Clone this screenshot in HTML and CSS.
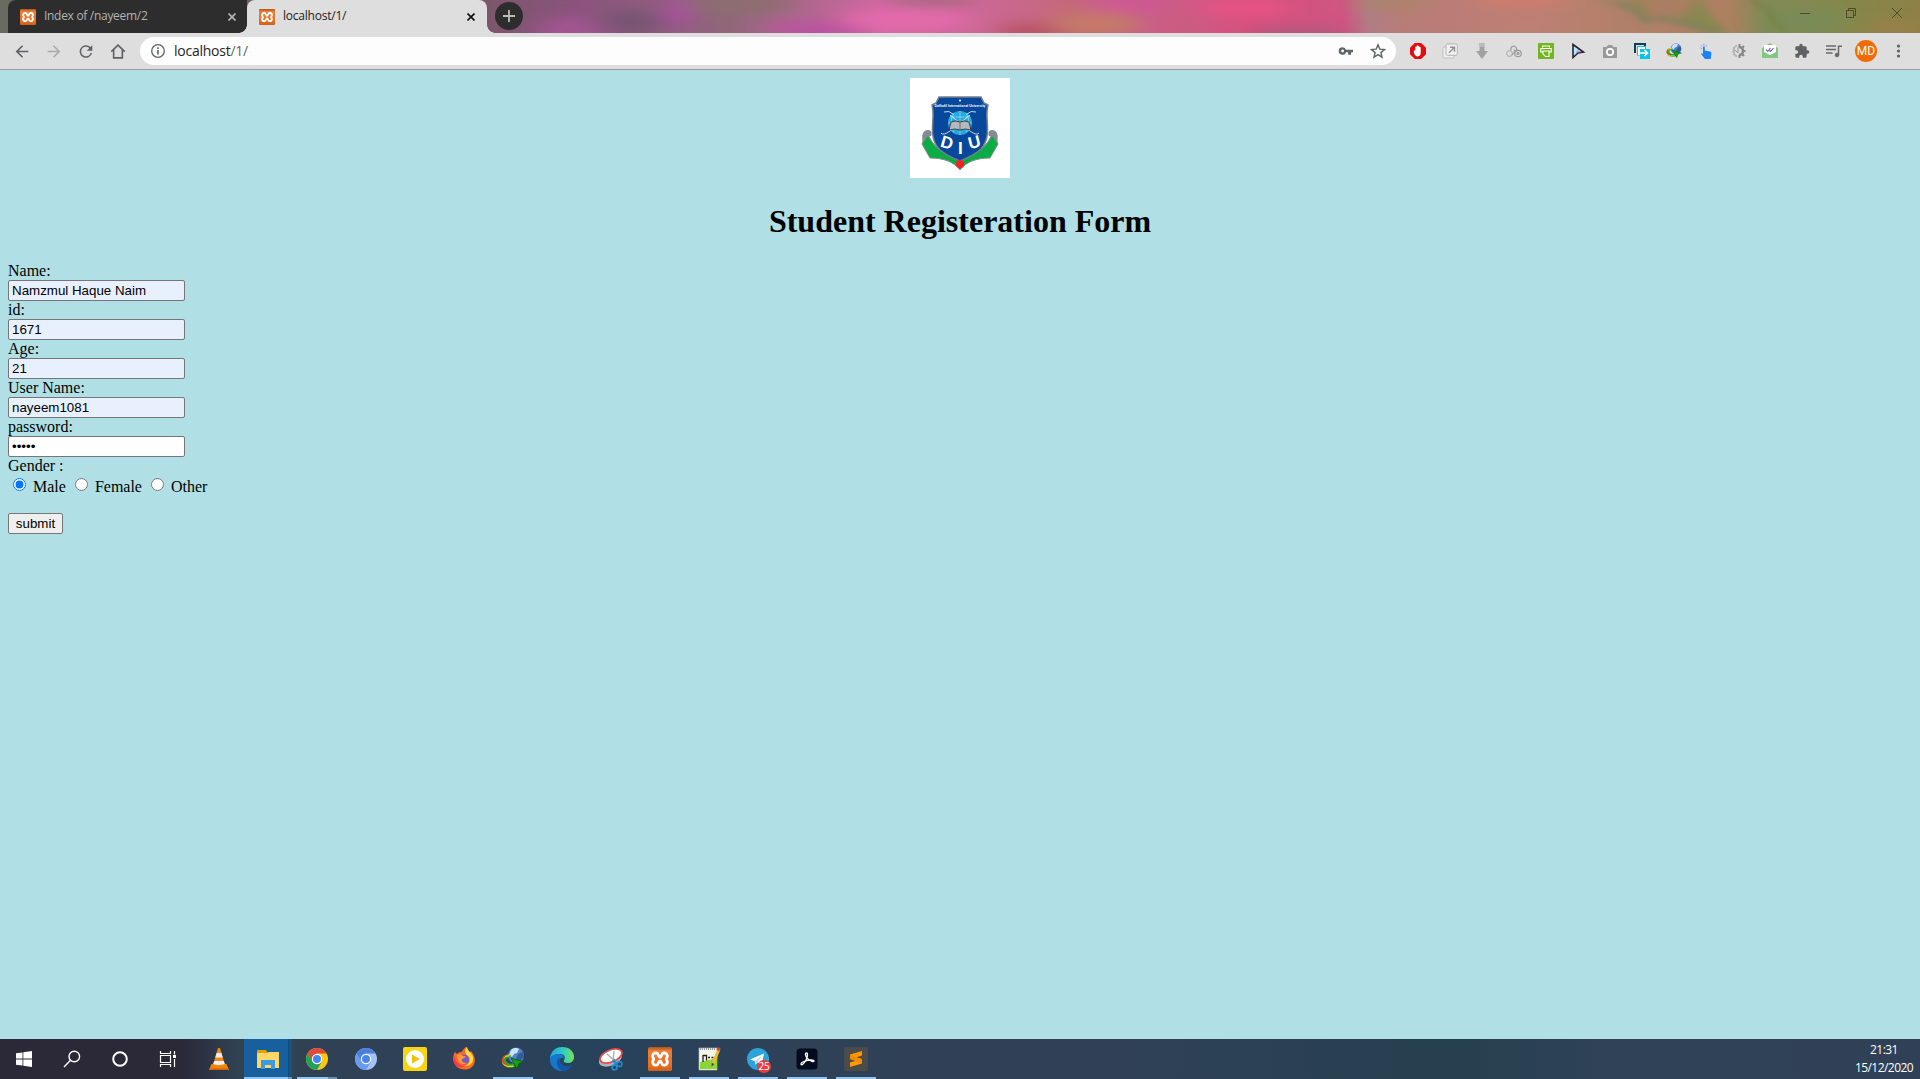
FILE: index.html
```html
<!DOCTYPE html>
<html lang="en">
<head>
<meta charset="utf-8">
<title>localhost/1/</title>
<link rel="stylesheet" href="styles.css">
</head>
<body>
<svg class="defs" width="0" height="0">
  <defs>
    <linearGradient id="xg" x2="0" y2="1"><stop offset="0" stop-color="#a9541c"/><stop offset=".16" stop-color="#ef7d35"/><stop offset=".8" stop-color="#e86c1f"/><stop offset="1" stop-color="#c9601f"/></linearGradient>
    <symbol id="xampp" viewBox="0 0 24 24">
      <rect width="24" height="24" rx="1.500" fill="url(#xg)"/>
      <path d="M4.600 9A3 3 0 0 1 7.600 6h.8C10.600 6 10.200 10.300 12 10.300S13.400 6 15.600 6h.8a3 3 0 0 1 3 3c0 1.700-1.200 1.900-1.200 3.100s1.200 1.400 1.200 3a3 3 0 0 1-3 3h-.8c-2.200 0-1.800-4.100-3.600-4.100s-1.400 4.100-3.600 4.100h-.8a3 3 0 0 1-3-3c0-1.600 1.200-1.800 1.200-3S4.600 10.700 4.600 9z" fill="none" stroke="#fff" stroke-width="2.800" stroke-linejoin="round"/>
    </symbol>
    <symbol id="idm" viewBox="0 0 24 24">
      <circle cx="15" cy="8.500" r="8" fill="#4f83c8"/>
      <path d="M10 3c3-3 7-2 8-1l-2 4-3 1-2 3-3-2z" fill="#c9e2f5"/>
      <path d="M17 7l5-2 1 5-4 4-4-2z" fill="#315c9e"/>
      <path d="M1 15C0 9 5 7 10 8l-2 3c-3 0-4 2-2 4s5 2 7 1l2 3c-6 4-13 1-14-4z" fill="#29a52e"/>
      <path d="M1 13c1-5 5-6 8-5l-1 1.500c-4-.5-6 2-5 5 1 4 6 5 9 4l1 1c-6 2-13-1-12-6.500z" fill="#f1d820"/>
      <path d="M1 12c1-3 4-5 7-4-4 0-6 3-5 6 1 3 3 4 5 5-5-.5-8-4-7-7z" fill="#e8342b"/>
      <path d="M10 11l13 4-5 1.500-2 5.500z" fill="#16a016" stroke="#07570b" stroke-width=".8"/>
    </symbol>
    <filter id="soft" x="-30%" y="-60%" width="160%" height="220%"><feGaussianBlur stdDeviation="12 6"/></filter>
    <filter id="soft2" x="-30%" y="-60%" width="160%" height="220%"><feGaussianBlur stdDeviation="3"/></filter>
    <linearGradient id="sky">
      <stop offset="0" stop-color="#686b60"/><stop offset=".25" stop-color="#7a5769"/><stop offset=".30" stop-color="#8b537e"/><stop offset=".38" stop-color="#90677a"/><stop offset=".46" stop-color="#d067a2"/><stop offset=".51" stop-color="#cc6895"/><stop offset=".56" stop-color="#c46879"/><stop offset=".60" stop-color="#c95f88"/><stop offset=".65" stop-color="#d6517d"/><stop offset=".70" stop-color="#cf5581"/><stop offset=".713" stop-color="#b07d86"/><stop offset=".73" stop-color="#b87c77"/><stop offset=".8" stop-color="#bd8074"/><stop offset=".85" stop-color="#b08068"/><stop offset=".9" stop-color="#ad8060"/><stop offset=".92" stop-color="#828a56"/><stop offset=".96" stop-color="#84884a"/><stop offset="1" stop-color="#8d8145"/>
    </linearGradient>
  </defs>
</svg>

<header class="browser">
  <div class="tabstrip">
    <svg class="theme" width="1920" height="33" viewBox="0 0 1920 33">
      <rect width="1920" height="33" fill="url(#sky)"/>
      <g filter="url(#soft)">
        <ellipse cx="575" cy="30" rx="40" ry="13" fill="#a1558f"/>
        <ellipse cx="630" cy="22" rx="35" ry="12" fill="#785473"/>
        <ellipse cx="678" cy="12" rx="15" ry="18" fill="#a6539a"/>
        <ellipse cx="740" cy="4" rx="55" ry="9" fill="#8c6e70"/>
        <ellipse cx="815" cy="30" rx="50" ry="10" fill="#b9559f"/>
        <ellipse cx="905" cy="20" rx="65" ry="11" fill="#e36aac"/>
        <ellipse cx="930" cy="0" rx="45" ry="5" fill="#9c6878"/>
        <ellipse cx="1035" cy="32" rx="40" ry="10" fill="#b95468"/>
        <ellipse cx="1095" cy="24" rx="45" ry="13" fill="#c5786b"/>
        <ellipse cx="1125" cy="4" rx="38" ry="8" fill="#cf5795"/>
        <ellipse cx="1180" cy="25" rx="24" ry="10" fill="#ca5c80"/>
        <ellipse cx="1245" cy="8" rx="45" ry="9" fill="#e65284"/>
        <ellipse cx="1300" cy="34" rx="50" ry="7" fill="#ae597e"/>
        <ellipse cx="1520" cy="0" rx="50" ry="4" fill="#dc7866"/>
        <ellipse cx="1390" cy="4" rx="40" ry="5" fill="#a98566"/>
        <ellipse cx="1800" cy="22" rx="40" ry="14" fill="#7a8b57"/>
        <ellipse cx="1895" cy="28" rx="30" ry="8" fill="#9a8048"/>
      </g>
      <g filter="url(#soft2)">
        <path d="M1590 0h120l-8 14-22 4-36 2-16-12z" fill="#8b8551" opacity=".75"/>
        <path d="M1645 2h45l-6 11-34 4z" fill="#b27b66" opacity=".8"/>
        <path d="M1675 22l30-14 12 14 15 11h-28z" fill="#7f8a4e" opacity=".8"/>
        <path d="M1618 4l18 8 8 9 14-3 32 7 28 9" fill="none" stroke="#6f8060" stroke-width="3"/>
        <path d="M1752 0l16 10 6 12 12 8" fill="none" stroke="#748348" stroke-width="5"/>
      </g>
    </svg>
    <div class="tab tab-back">
      <svg class="fav" width="16" height="16"><use href="#xampp"/></svg>
      <span class="tab-title">Index of /nayeem/2</span>
      <svg class="tab-x" width="8" height="8" viewBox="0 0 8 8"><path d="M.5.5l7 7M7.500.5l-7 7"/></svg>
    </div>
    <div class="tab tab-front">
      <svg class="fav" width="16" height="16"><use href="#xampp"/></svg>
      <span class="tab-title">localhost/1/</span>
      <svg class="tab-x" width="8" height="8" viewBox="0 0 8 8"><path d="M.5.5l7 7M7.500.5l-7 7"/></svg>
    </div>
    <div class="newtab"><svg width="12" height="12" viewBox="0 0 12 12"><path d="M6 0v12M0 6h12" stroke="#bcbcbc" stroke-width="1.800"/></svg></div>
    <div class="winbtns">
      <svg width="46" height="26"><path d="M18 13.500h10"/></svg>
      <svg width="46" height="26"><path d="M18.500 10.500h7v7h-7zM20.500 10.500v-2h7v7h-2"/></svg>
      <svg width="46" height="26"><path d="M18 8l10 10M28 8l-10 10"/></svg>
    </div>
  </div>

  <div class="toolbar">
    <div class="cells nav">
      <svg viewBox="0 0 24 24" fill="#5f6063"><path d="M20 11H7.830l5.590-5.590L12 4l-8 8 8 8 1.410-1.410L7.830 13H20z"/></svg>
      <svg viewBox="0 0 24 24" fill="#aaa"><path d="M4 11h12.170l-5.590-5.590L12 4l8 8-8 8-1.410-1.410L16.170 13H4z"/></svg>
      <svg viewBox="0 0 24 24" fill="#5f6063"><path d="M17.650 6.350A8 8 0 1 0 19.730 14h-2.080A6 6 0 1 1 12 6c1.660 0 3.140.69 4.220 1.780L13 11h7V4z"/></svg>
      <svg viewBox="0 0 24 24"><path d="M3.500 12.200L12 4l8.500 8.200M6.500 10v10h11V10" fill="none" stroke="#5f6063" stroke-width="2"/></svg>
    </div>
    <div class="omnibox">
      <svg width="16" height="16" viewBox="0 0 16 16"><circle cx="8" cy="8" r="6.300" fill="none" stroke="#5f6368" stroke-width="1.300"/><path d="M8 7v4.500M8 4.300v1.600" stroke="#5f6368" stroke-width="1.600"/></svg>
      <span class="url">localhost<span class="path">/1/</span></span>
      <svg class="key" width="16" height="16" viewBox="0 0 16 16"><path d="M4.600 4.200a3.800 3.800 0 1 0 3.500 5.100h2v2.400h3V9.300H15V6.700H8.100a3.800 3.800 0 0 0-3.500-2.500zm0 2.400a1.400 1.400 0 1 1 0 2.800 1.400 1.400 0 0 1 0-2.800z" fill="#5f6368" fill-rule="evenodd"/></svg>
      <svg width="16" height="16" viewBox="0 0 16 16"><path d="M8 1.800l1.800 4.300 4.700.4-3.600 3.100 1.100 4.600L8 11.700l-4 2.500 1.100-4.600-3.600-3.100 4.700-.4z" fill="none" stroke="#5f6368" stroke-width="1.400"/></svg>
    </div>
    <div class="cells ext">
      <svg viewBox="0 0 16 16"><path d="M4.800 0h6.400L16 4.800v6.400L11.200 16H4.800L0 11.200V4.800z" fill="#e20d12"/><path d="M3.800 8c0-1 1.200-1 1.500.2V4c0-.8 1.200-.8 1.300 0V3c0-.9 1.300-.9 1.400 0v.4c.1-.8 1.300-.8 1.400 0v1c.2-.7 1.300-.6 1.300.2v5.200c0 2.200-1.200 3.600-3 3.600-2.300 0-3.900-2.400-3.900-5.400z" fill="#fff"/></svg>
      <svg viewBox="0 0 16 16"><rect x="1" y="4" width="11" height="11" rx="1.500" fill="#eee" stroke="#bdbdbd"/><rect x="4" y="1" width="11.300" height="11.300" rx="1.500" fill="#f1f1f1" stroke="#b3b3b3"/><path d="M7 9.800l5-5M8 4.300h4.500v4.500" fill="none" stroke="#909090" stroke-width="1.400"/></svg>
      <svg viewBox="0 0 16 16"><path d="M5.500 0h5v8H14L8 16 2 8h3.500z" fill="#a1a1a1"/><path d="M5.500 0h5v4h-5z" fill="#bcbcbc"/></svg>
      <svg viewBox="0 0 16 16" fill="none" stroke="#999" stroke-width="1.200"><path d="M5 7.500C4 4 8 1.600 10 4.500s-.5 4-2 2.500"/><circle cx="3.500" cy="10.500" r="2.800" stroke="#b5b5b5"/><circle cx="12" cy="10.500" r="3.200"/><circle cx="12" cy="10.500" r=".8" stroke-width="1.500"/><path d="M6 12L10 7"/></svg>
      <svg viewBox="0 0 16 16"><rect width="16" height="16" rx="1" fill="#70b61c"/><path d="M4.500 4.500V3h7v1.500M4.500 9H2.800V5.500h10.400V9h-1.700M5 8h6v5.500H7.500L5 11z" fill="none" stroke="#fff" stroke-width="1.100"/></svg>
      <svg viewBox="0 0 16 16"><path d="M3 1.500L13.500 9 8 10l-5 4.500z" fill="#b7e6fb" stroke="#25252d" stroke-width="1.600"/><path d="M7.500 7l4 2-4.500.5-2.500 3z" fill="#c48ced"/></svg>
      <svg viewBox="0 0 16 16"><path d="M1 4h3.500L6 2h4l1.500 2H15v11H1z" fill="#999"/><circle cx="8" cy="9" r="3.200" fill="none" stroke="#fff" stroke-width="1.700"/></svg>
      <svg viewBox="0 0 16 16"><path d="M1 10V1h10v3" fill="none" stroke="#06405d" stroke-width="2"/><path d="M3 3h9v3h4v10H6v-3.500H3z" fill="#06c5e5"/><path d="M4 4h7v2H6v6H4z" fill="#fff"/><path d="M6 10h7M10.500 7l3 3-3 3" fill="none" stroke="#fff" stroke-width="1.700"/></svg>
      <svg viewBox="0 0 24 24"><use href="#idm"/></svg>
      <svg viewBox="0 0 16 16"><path d="M5 4.500c0-1.300 1.800-1.300 1.800 0v3l4.800 1c1.500.3 1.900 1 1.800 2L12.700 16H7L3 11c.4-1 1.300-.7 2 0z" fill="#1981fa"/><path d="M3.800 5.500l-1.500-.5M4.200 3.500L3 2.300M5.900 2.500V.8M7.600 3.500l1.200-1.200" stroke="#58a4f7" stroke-width="1"/></svg>
      <svg viewBox="0 0 16 16" fill="none"><path d="M7 2.500a6 6 0 0 0 0 11M4 4v8" stroke="#b5b5b5" stroke-width="1.800"/><path d="M9 4a4 4 0 0 1 0 8" stroke="#888" stroke-width="2.600"/><path d="M9.500 1v3M9.500 12v3M13 8h2.500M12 5l2-2M12 11l2 2" stroke="#888" stroke-width="2"/><path d="M5 7l3 3V4" stroke="#999"/></svg>
      <svg viewBox="0 0 16 16"><path d="M0 5l8-5 8 5v10H0z" fill="#81c883"/><path d="M2 2h12v7l-6 3-6-3z" fill="#fff"/><path d="M4 6.500l1.700 2L8.500 5M7.500 7.500l1 1L11.500 5" fill="none" stroke="#6857b5" stroke-width="1.100"/></svg>
      <svg viewBox="0 0 24 24" fill="#5f6063"><path d="M20.500 11H19V7a2 2 0 0 0-2-2h-4V3.500a2.500 2.500 0 0 0-5 0V5H4a2 2 0 0 0-2 2v3.800h1.500a2.700 2.700 0 0 1 0 5.400H2V20a2 2 0 0 0 2 2h3.800v-1.500a2.700 2.700 0 0 1 5.400 0V22H17a2 2 0 0 0 2-2v-4h1.500a2.500 2.500 0 0 0 0-5z"/></svg>
      <svg viewBox="0 0 16 16" fill="none" stroke="#68696b" stroke-width="1.500"><path d="M0 3h10M0 6.500h10M0 10h6.500M12.500 12V3.200H16"/><circle cx="11" cy="12" r="1.800" fill="#68696b" stroke-width="1"/></svg>
      <span class="avatar">MD</span>
      <svg viewBox="0 0 16 16" fill="#5f6063"><circle cx="8.500" cy="3" r="1.600"/><circle cx="8.500" cy="8" r="1.600"/><circle cx="8.500" cy="13" r="1.600"/></svg>
    </div>
  </div>
</header>

<main class="page">
  <svg class="logo" width="100" height="100" viewBox="0 0 100 100">
    <rect width="100" height="100" fill="#fff"/>
    <path d="M17 54C22 68 32 76 50 81 68 76 78 68 83 54l5 12-8 14C66 80 56 84 50 92 44 84 34 80 20 80l-8-14z" fill="#0aad43" stroke="#858b90" stroke-width="1"/>
    <path d="M13 65c-2-8 0-13 5-13 4 0 4 4 3 6l-4 1zM87 65c2-8 0-13-5-13-4 0-4 4-3 6l4 1z" fill="#858b90"/>
    <path d="M29 19h42l3 6 4 2c-4 14 5 30-7 44-6 6-14 9-21 12-7-3-15-6-21-12C17 57 26 41 22 27l4-2z" fill="#07489d" stroke="#77808a" stroke-width="1.500"/>
    <text x="50" y="28.500" text-anchor="middle" textLength="51" lengthAdjust="spacingAndGlyphs" class="logo-name">Daffodil International University</text>
    <circle cx="50" cy="22.500" r="1" fill="#fff"/>
    <circle cx="50" cy="45" r="12" fill="#25a9df"/>
    <path d="M38 45h24M40 39h20M40 51h20M50 33v24M44 35q-6 10 0 20M56 35q6 10 0 20" stroke="#a8e4f5" stroke-width=".6" fill="none"/>
    <g fill="none" stroke="#dbe9f4" stroke-width=".9"><path d="M34 34q5-2 9 2M66 34q-5-2-9 2M31 55q2 3 9-2M69 55q-2 3-9-2M40 53L60 37M60 53L40 37"/></g>
    <path d="M41 44q5-2 9 0 4-2 9 0l2 8q-6-2-11 0-5-2-11 0z" fill="#b4babd" stroke="#333" stroke-width=".9"/>
    <path d="M50 44v8" stroke="#555" stroke-width=".7"/>
    <g class="logo-abbr"><text x="31" y="70" transform="rotate(16 36 64)">D</text><text x="48" y="75.500">I</text><text x="58" y="70" transform="rotate(-14 64 64)">U</text></g>
    <circle cx="50" cy="86" r="4" fill="#f32128"/>
  </svg>
  <h1>Student Registeration Form</h1>
  <form>
    <label class="field">Name:<input class="filled" type="text" value="Namzmul Haque Naim"></label>
    <label class="field">id:<input class="filled" type="text" value="1671"></label>
    <label class="field">Age:<input class="filled" type="text" value="21"></label>
    <label class="field">User Name:<input class="filled" type="text" value="nayeem1081"></label>
    <label class="field">password:<input type="password" value="12345"></label>
    <div class="gender">Gender :</div>
    <div class="choices">
      <input type="radio" name="gender" checked> Male
      <input type="radio" name="gender"> Female
      <input type="radio" name="gender"> Other
    </div>
    <button type="button">submit</button>
  </form>
</main>

<footer class="taskbar">
  <div class="system">
    <svg viewBox="0 0 24 24" fill="#fff"><path d="M4 6.300l6.500-.9v6.200H4zM11.300 5.300L20 4v7.600h-8.700zM4 12.400h6.500v6.200L4 17.700zM11.300 12.400H20V20l-8.700-1.300z"/></svg>
    <svg viewBox="0 0 24 24" fill="none" stroke="#fff" stroke-width="1.400"><circle cx="14.300" cy="9.500" r="5.300"/><path d="M10.500 13.300L4 20"/></svg>
    <svg viewBox="0 0 24 24" fill="none" stroke="#fff" stroke-width="2"><circle cx="12" cy="12" r="6.800"/></svg>
    <svg viewBox="0 0 24 24" fill="none" stroke="#fff" stroke-width="1.200"><path d="M4.500 4v2.500h10V4M4.500 20v-2.500h10V20M4.500 8.500h10v7h-10zM18.500 4v3.500M18.500 12v8"/><path d="M17 8h3v3h-3z" fill="#fff" stroke="none"/></svg>
  </div>
  <div class="apps">
    <div class="app"><svg viewBox="0 0 24 24"><path d="M4.500 17h15l2.500 6H2z" fill="#ef8509"/><path d="M11 1h2l5 17q-6 3-12 0z" fill="#f28a12"/><path d="M9.600 6h4.800l1.300 4.500H8.300zM7.200 14h9.600l1 3q-6 2-11.600 0z" fill="#eee"/><path d="M2.500 23l.6-1.500h17.800l.6 1.500z" fill="#c9650a"/></svg></div>
    <div class="app active"><svg viewBox="0 0 24 24"><path d="M1 3h9l2 3H1z" fill="#e0a000"/><path d="M1 6h10l2-1h10v16H1z" fill="#ffd766"/><path d="M5 13h14v9h-4v-4H9v4H5z" fill="#3a9be2"/></svg></div>
    <div class="app chrome-run"><svg viewBox="0 0 24 24"><circle cx="12" cy="12" r="11" fill="#fbc617"/><path d="M2.500 6.500A11 11 0 0 1 21.500 6.500H12L7.500 14.500z" fill="#dc4b3e"/><path d="M2.500 6.500A11 11 0 0 0 12 23l4.700-8.200-8.500.5z" fill="#23a15b"/><circle cx="12" cy="12" r="5.200" fill="#fff"/><circle cx="12" cy="12" r="4" fill="#4787ed"/></svg></div>
    <div class="app"><svg viewBox="0 0 24 24"><circle cx="12" cy="12" r="11" fill="#a4c1f8"/><path d="M2.500 6.500A11 11 0 0 1 21.500 6.500H12L7.500 14.500z" fill="#4c7fdd"/><path d="M2.500 6.500A11 11 0 0 0 12 23l4.700-8.200-8.500.5z" fill="#6a9aef"/><circle cx="12" cy="12" r="5.200" fill="#fff"/><circle cx="12" cy="12" r="4" fill="#4787ed"/></svg></div>
    <div class="app"><svg viewBox="0 0 24 24"><rect width="24" height="24" rx="2" fill="#f5d516"/><circle cx="12" cy="12" r="9" fill="#fff"/><path d="M9 7.500l8 4.500-8 4.500z" fill="#e9c512"/></svg></div>
    <div class="app"><svg viewBox="0 0 24 24"><path d="M3 5l2 2c2-2 4-2 5-2 1-3 3-5 5-5 0 3 2 4 3 6l1-2c5 6 5 12 1 16-5 4-12 3-16-1C0 14 1 8 3 5z" fill="#ff6b25"/><path d="M15 0c0 4 5 5 6 10 1 6-3 9-8 9 5-2 6-7 3-10-3-2-4-6-1-9z" fill="#ffda3e"/><path d="M2 8c1 4 3 11 11 11-4 3-9 1-11-3z" fill="#fb3653"/><circle cx="12" cy="12.500" r="5" fill="#7857ca"/><path d="M5 8c3-1 5 0 6 1l3 .5c-1 2-3 1-4 3s2 4 5 3c-4 4-10 0-10-7.500z" fill="#ff9835"/></svg></div>
    <div class="app run"><svg viewBox="0 0 24 24"><use href="#idm"/></svg></div>
    <div class="app"><svg viewBox="0 0 24 24"><defs><linearGradient id="edge"><stop offset="0" stop-color="#25a5df"/><stop offset=".55" stop-color="#31cbc5"/><stop offset="1" stop-color="#78e150"/></linearGradient></defs><path d="M0 11C1 3 7 0 12 0c8 0 12 5 12 10 0 4-3 6-6 6-3 0-5-1-4-3 2-3 0-6-4-6-5 0-9 2-10 7z" fill="url(#edge)"/><path d="M0 13c0-4 4-6 9-6 3 0 5 2 5 4-3-1-6 2-4 6 2 3 7 4 12 1-3 5-7 6-10 6C5 24 0 19 0 13z" fill="#1378ce"/><path d="M9 10c-4 4-2 12 4 13.900 4-.2 7-2 9-5.900-6 3-12 1-13-8z" fill="#1356a5"/></svg></div>
    <div class="app"><svg viewBox="0 0 24 24"><ellipse cx="11.500" cy="11.500" rx="12" ry="7" fill="#a9b4bd" transform="rotate(-22 12 12)"/><ellipse cx="12" cy="9" rx="11.500" ry="6" fill="#fff" stroke="#e84a48" stroke-width="1.700" transform="rotate(-22 12 9)"/><path d="M8 7l10 9M15 4l-1 11" stroke="#aaa" stroke-width="1.300"/><g fill="none" stroke="#2489c9" stroke-width="1.700"><circle cx="20.500" cy="17" r="2.400"/><circle cx="15.500" cy="20.500" r="2.400"/><path d="M13 14l6 2M15 12l1 6"/></g></svg></div>
    <div class="app run"><svg viewBox="0 0 24 24"><use href="#xampp"/></svg></div>
    <div class="app run"><svg viewBox="0 0 24 24"><path d="M2 1h18v22H2z" fill="#f4f5e9" stroke="#bbb" stroke-width=".6"/><path d="M3 15l17-4v11H3z" fill="#8bd536"/><path d="M3 2h16" stroke="#999" stroke-width="2" stroke-dasharray="1 1"/><path d="M6 8v7M6 8.500h3.500v5M11 10.500h2M14.500 10.500h2" fill="none" stroke="#222" stroke-width="1.300"/><path d="M22 2L16 17" stroke="#edbb29" stroke-width="3"/><path d="M14.800 16l2.300 1-2.500 2.500z" fill="#333"/><path d="M20.500 0l3 1-1 3-3-1z" fill="#c84b39"/></svg></div>
    <div class="app run telegram"><svg viewBox="0 0 24 24"><circle cx="12" cy="12" r="11" fill="#2da3dc"/><path d="M4 12.500l14-6-2.500 12-4-3-2 2-.8-3.500z" fill="#fff"/><path d="M8.700 14l7-5-4 6-2 2.500z" fill="#bad7e9"/></svg><span class="badge">25</span></div>
    <div class="app run"><svg viewBox="0 0 24 24"><rect x="1.500" y="1.500" width="21" height="21" rx="3.500" fill="#030b1e"/><path d="M11 6c2-1 2 3 0 7-2 4-5 6-5 4s6-4 10-4c5 0 3 3 0 1-3-1-7-6-5-8z" fill="none" stroke="#fff" stroke-width="1.300"/></svg></div>
    <div class="app run"><svg viewBox="0 0 24 24"><rect width="24" height="24" rx="2" fill="#4b4b4a"/><path d="M18 4v4.500l-6.500 2L18 12v4.500L6 20v-4.500l6-1.800-6-1.800V7.500z" fill="#ff9802"/><path d="M6 7.800V12l12 4.500V12z" fill="#f08c00"/></svg></div>
  </div>
  <div class="clock"><div>21:31</div><div>15/12/2020</div></div>
</footer>
</body>
</html>
```
FILE: styles.css
```css
* { box-sizing: border-box; }
body {
  margin: 0;
  height: 1079px;
  display: flex;
  flex-direction: column;
  overflow: hidden;
  background: #b0e0e6;
}
.defs { position: absolute; }
svg { display: block; flex: none; }

/* tab strip */
.tabstrip {
  position: relative;
  display: flex;
  height: 33px;
  padding-left: 8px;
  font: 12px/33px "Open Sans", "Noto Sans", sans-serif;
}
.theme { position: absolute; left: 0; top: 0; }
.tab, .newtab, .winbtns { position: relative; }
.tab {
  display: flex;
  align-items: center;
  width: 239px;
  padding: 0 11px 0 12px;
}
.tab-back { background: #2d2d2d; color: #b3b3b3; border-radius: 8px 0 8px 0; }
.tab-front { width: 240px; background: #dedede; color: #222; border-radius: 8px 8px 0 0; }
.tab-front::before, .tab-front::after {
  content: "";
  position: absolute;
  bottom: 0;
  width: 8px;
  height: 8px;
}
.tab-front::before { left: -8px; background: radial-gradient(circle at 0 0, transparent 7.500px, #dedede 8px); }
.tab-front::after { right: -8px; background: radial-gradient(circle at 100% 0, transparent 7.500px, #dedede 8px); }
.tab-title { flex: 1; margin-left: 8px; height: 33px; line-height: 31px; letter-spacing: -.3px; white-space: nowrap; }
.tab-front .tab-title { letter-spacing: -.22px; }
.tab-x { fill: none; stroke: currentColor; stroke-width: 1.700; }
.tab-front .tab-x { stroke: #111; margin-right: 1px; }
.newtab {
  display: flex;
  align-items: center;
  justify-content: center;
  width: 28px;
  height: 28px;
  margin: 2px 0 0 8px;
  border-radius: 50%;
  background: #2d2d2d;
}
.winbtns { display: flex; margin-left: auto; }
.winbtns svg { fill: none; stroke: #50492d; stroke-width: 1; }

/* toolbar */
.toolbar {
  display: flex;
  align-items: center;
  gap: 6px;
  height: 37px;
  padding: 0 6px;
  background: #dedede;
  border-bottom: 1px solid #999c9d;
}
.cells { display: flex; }
.cells > svg { width: 32px; height: 16px; }
.nav > svg { height: 19px; }
.omnibox {
  flex: 1;
  display: flex;
  align-items: center;
  height: 28px;
  padding: 0 10px;
  border-radius: 14px;
  background: #fdfdfd;
}
.url { flex: 1; margin-left: 8px; color: #252525; font: 14px/28px "Open Sans", "Noto Sans", sans-serif; letter-spacing: -.25px; }
.path { color: #666; }
.key { margin-right: 16px; }
.ext { align-items: center; }
.avatar {
  width: 22px;
  height: 22px;
  margin: 0 5px;
  border-radius: 50%;
  background: #f26a00;
  color: #fff;
  font: 12px/22px Roboto, sans-serif;
  text-align: center;
}

/* registration page */
.page {
  flex: 1;
  padding: 8px;
  font: 16px/18px "Liberation Serif", serif;
  color: #000;
}
.logo { margin: 0 auto; }
.logo-name { font: bold 4px "Liberation Sans", sans-serif; fill: #fff; }
.logo-abbr { font: bold 17px "Liberation Sans", sans-serif; fill: #fff; }
h1 { margin: 25px 0 22px; font-size: 32px; line-height: 37px; text-align: center; }
.field, .field input { display: block; }
.field { width: 177px; }
.field input {
  width: 177px;
  height: 21px;
  padding: 1px 3px;
  border: 1px solid #767676;
  border-radius: 2px;
  background: #fff;
  color: #000;
  font: 13.333px "Liberation Sans", sans-serif;
}
.field input.filled { background: #e8f0fe; }
.choices { height: 38px; padding-top: 1px; line-height: 20px; }
.choices input { position: relative; top: -1px; }
button {
  display: block;
  width: 55px;
  height: 21px;
  padding: 0;
  border: 1px solid #767676;
  border-radius: 2px;
  background: #efefef;
  color: #000;
  font: 13.333px "Liberation Sans", sans-serif;
}

/* taskbar */
.taskbar {
  display: flex;
  height: 40px;
  background: linear-gradient(90deg, #2b2838 0, #2b2838 180px, #304152 235px, #2f4157 440px, #26425b 600px, #2f4157 800px, #304157 1100px, #26404f 1450px, #2f4256 1600px, #304157 100%);
  color: #fff;
}
.system { display: flex; align-items: center; width: 195px; }
.system svg { width: 48px; height: 24px; }
.apps { display: flex; }
.app { position: relative; display: flex; align-items: center; justify-content: center; width: 49px; height: 40px; padding-right: 2px; }
.app svg { width: 24px; height: 24px; }
.active { background: linear-gradient(90deg, #17609d 44px, #134a78 44px, #134a78 45px, #1a5280 45px, #1a5280 48px, transparent 48px); }
.app.active::after, .chrome-run::after, .run::after {
  content: "";
  position: absolute;
  bottom: 0;
  left: 4px;
  width: 40px;
  height: 2px;
  background: #91c4ee;
}
.app.active::after { left: 0; width: 48px; background: linear-gradient(90deg, #91c4ee 44px, #6797bd 44px); }
.chrome-run::after { background: linear-gradient(90deg, #91c4ee 31px, #6d8fab 31px); }
.badge {
  position: absolute;
  left: 23px;
  top: 21px;
  width: 14px;
  height: 13px;
  border-radius: 7px;
  background: #e73d40;
  font: 10px/13px "Open Sans", sans-serif;
  letter-spacing: -.3px;
  text-align: center;
}
.clock {
  margin-left: auto;
  width: 72px;
  padding-top: 2px;
  text-align: center;
  font: 12px/18px "Open Sans", "Noto Sans", sans-serif;
  letter-spacing: -.55px;
}
```
